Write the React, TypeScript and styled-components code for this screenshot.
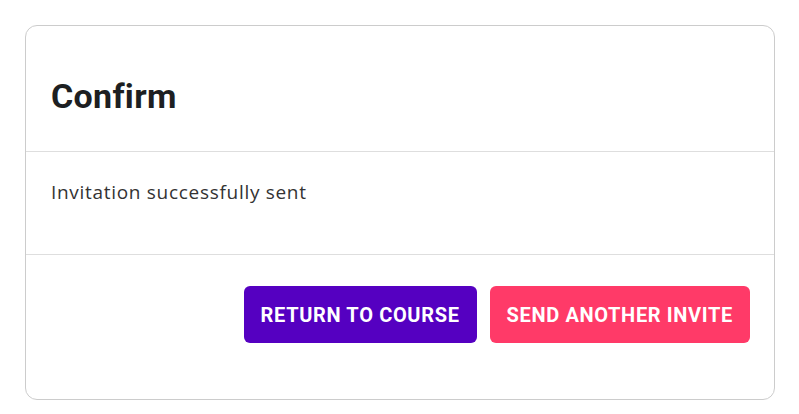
import React from "react";
import styled, { createGlobalStyle } from "styled-components";

const Global = createGlobalStyle`
  body {
    margin: 0;
    padding: 25px 24px 14px 25px;
    background: #fff;
    font-family: "Roboto", "Liberation Sans", sans-serif;
  }
`;

const Card = styled.div`
  width: 750px;
  box-sizing: border-box;
  border: 1px solid #cccccc;
  border-radius: 12px;
  background: #fff;
`;

const Header = styled.div`
  height: 126px;
  box-sizing: border-box;
  padding: 0 25px;
  display: flex;
  align-items: center;
  border-bottom: 1px solid #dedede;
`;

const Title = styled.h1`
  margin: 0;
  padding-top: 14px;
  font-size: 34px;
  font-weight: 700;
  letter-spacing: 0.3px;
  color: #1d1f22;
`;

const Body = styled.div`
  height: 103px;
  box-sizing: border-box;
  padding: 27px 25px 0;
  border-bottom: 1px solid #dedede;
  font-family: "Open Sans", "Roboto", sans-serif;
  font-size: 19px;
  letter-spacing: 0.7px;
  color: #333333;
`;

const Footer = styled.div`
  display: flex;
  justify-content: flex-end;
  gap: 13px;
  padding: 31px 24px 56px;
`;

const Button = styled.button<{ $color: string }>`
  height: 57px;
  padding: 0 17px;
  border: none;
  border-radius: 6px;
  background: ${(p) => p.$color};
  color: #fff;
  font-family: "Roboto", "Liberation Sans", sans-serif;
  font-size: 20px;
  font-weight: 700;
  letter-spacing: 0.65px;
  cursor: pointer;
`;

export default function App() {
  return (
    <>
      <Global />
      <Card>
        <Header>
          <Title>Confirm</Title>
        </Header>
        <Body>Invitation successfully sent</Body>
        <Footer>
          <Button $color="#5500c1">RETURN TO COURSE</Button>
          <Button $color="#ff3a68">SEND ANOTHER INVITE</Button>
        </Footer>
      </Card>
    </>
  );
}
